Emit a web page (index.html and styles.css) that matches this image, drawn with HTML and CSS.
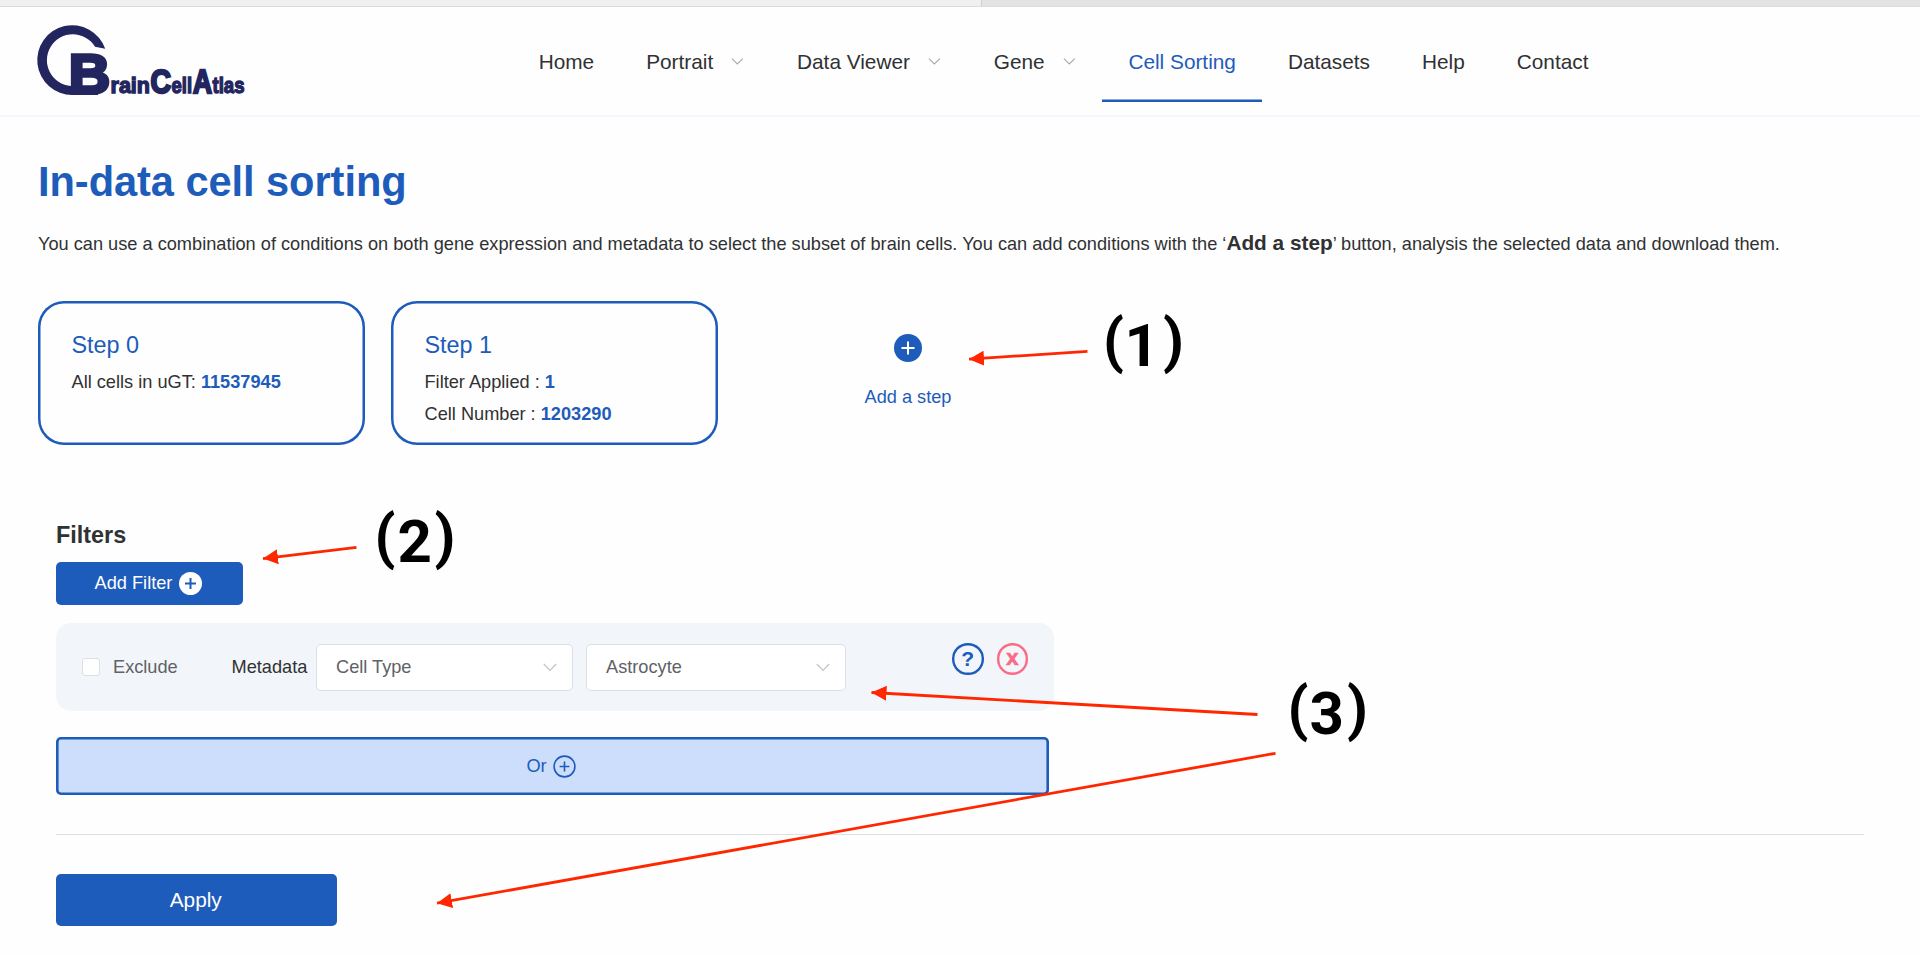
FILE: index.html
```html
<!DOCTYPE html>
<html lang="en">
<head>
<meta charset="utf-8">
<title>Brain Cell Atlas - Cell Sorting</title>
<link rel="stylesheet" href="styles.css">
</head>
<body>
<div class="tabstrip"><div class="tab-left"></div><div class="tab-right"></div></div>
<header class="header">
  <svg class="logo" viewBox="36 20 210 80" width="210" height="80">
    <path d="M105.2 48.8A34.9 34.9 0 1 0 72.5 95H98V86H71A25.9 25.9 0 1 1 95 46.8Z"/>
    <text y="93.4"><tspan class="logo-b" x="68.8" y="92.8" textLength="41.5" lengthAdjust="spacingAndGlyphs">B</tspan><tspan class="logo-s" x="110.5" y="93.2" textLength="39.5" lengthAdjust="spacingAndGlyphs">rain</tspan><tspan class="logo-l" x="150.5" y="93.4" textLength="20.5" lengthAdjust="spacingAndGlyphs">C</tspan><tspan class="logo-s" x="171.5" y="93.2" textLength="20.5" lengthAdjust="spacingAndGlyphs">ell</tspan><tspan class="logo-l" x="193" y="93.4" textLength="19" lengthAdjust="spacingAndGlyphs">A</tspan><tspan class="logo-s" x="212.5" y="93.2" textLength="32" lengthAdjust="spacingAndGlyphs">tlas</tspan></text>
  </svg>
  <nav class="nav">
    <a class="nav-item">Home</a>
    <a class="nav-item">Portrait<svg class="nav-arrow" viewBox="0 0 32 20"><path d="M19 6.5l5.5 5.5 5.5-5.5"/></svg></a>
    <a class="nav-item">Data Viewer<svg class="nav-arrow" viewBox="0 0 32 20"><path d="M19 6.5l5.5 5.5 5.5-5.5"/></svg></a>
    <a class="nav-item">Gene<svg class="nav-arrow" viewBox="0 0 32 20"><path d="M19 6.5l5.5 5.5 5.5-5.5"/></svg></a>
    <a class="nav-item active">Cell Sorting</a>
    <a class="nav-item">Datasets</a>
    <a class="nav-item">Help</a>
    <a class="nav-item">Contact</a>
  </nav>
</header>
<main class="main">
  <h1 class="title">In-data cell sorting</h1>
  <p class="intro">You can use a combination of conditions on both gene expression and metadata to select the subset of brain cells. You can add conditions with the ‘<b>Add a step</b>’ button, analysis the selected data and download them.</p>
  <section class="steps">
    <div class="card">
      <div class="card-title">Step 0</div>
      <div class="card-line">All cells in uGT: <b>11537945</b></div>
    </div>
    <div class="card">
      <div class="card-title">Step 1</div>
      <div class="card-line">Filter Applied : <b>1</b></div>
      <div class="card-line">Cell Number : <b>1203290</b></div>
    </div>
    <div class="add-step">
      <svg width="28" height="28" viewBox="0 0 28 28"><circle cx="14" cy="14" r="14" fill="#1d5cba"/><path d="M14 7.5v13M7.5 14h13" stroke="#fff" stroke-width="2"/></svg>
      <span class="add-label">Add a step</span>
    </div>
  </section>
  <section class="filters">
    <h2 class="filters-title">Filters</h2>
    <button class="add-filter">Add Filter<svg width="23" height="23" viewBox="0 0 23 23"><circle cx="11.5" cy="11.5" r="11.5" fill="#fff"/><path d="M11.5 6v11M6 11.5h11" stroke="#1d5cba" stroke-width="2"/></svg></button>
    <div class="filter-row">
      <span class="checkbox"></span>
      <span class="exclude">Exclude</span>
      <span class="meta">Metadata</span>
      <div class="select select-key">Cell Type<svg width="14" height="9" viewBox="0 0 14 9"><path d="M.8 1l6.2 6.5L13.2 1"/></svg></div>
      <div class="select select-value">Astrocyte<svg width="14" height="9" viewBox="0 0 14 9"><path d="M.8 1l6.2 6.5L13.2 1"/></svg></div>
      <div class="row-actions">
        <span class="round help">?</span>
        <span class="round remove">x</span>
      </div>
    </div>
    <div class="or">Or<svg width="23" height="23" viewBox="0 0 23 23"><circle cx="11.5" cy="11.5" r="10.4"/><path d="M11.5 6.6v9.8M6.6 11.5h9.8"/></svg></div>
    <div class="divider"></div>
    <button class="apply">Apply</button>
  </section>
</main>
<svg class="notes" viewBox="0 0 1920 955" width="1920" height="955">
  <defs><marker id="tip" viewBox="0 0 15 15" refX="15" refY="7.5" markerWidth="15" markerHeight="15" markerUnits="userSpaceOnUse" orient="auto"><path d="M15 7.5L0 0V15Z" fill="#ff2600"/></marker></defs>
  <g class="arrows">
    <path marker-end="url(#tip)" d="M1087.5 351.3L969 359.2"/>
    <path marker-end="url(#tip)" d="M356.5 547.3L263 558.6"/>
    <path marker-end="url(#tip)" d="M1257.5 714.5L871.5 692.5"/>
    <path marker-end="url(#tip)" d="M1275.5 753.3L437 903.2"/>
  </g>
  <text x="1103 1124.5 1163" y="360.5 366 360.5">(1)</text>
  <text x="374.5 397.5 434.5" y="556.5 562 556.5">(2)</text>
  <text x="1287.5 1309.5 1347" y="728.5 734 728.5">(3)</text>
</svg>
</body>
</html>
```

FILE: styles.css
```css
* { box-sizing: border-box; }
body {
  margin: 0;
  height: 955px;
  overflow: hidden;
  background: #fefefe;
  font-family: "Liberation Sans", Arial, sans-serif;
  font-size: 18.2px;
  color: #303133;
}
.tabstrip { display: flex; height: 7px; border-bottom: 1px solid #dcdcdc; }
.tab-left { width: 982px; background: #f0f0f0; border-right: 1px solid #cfcfcf; }
.tab-right { flex: 1; background: #e3e3e3; }
.header {
  display: flex;
  height: 110px;
  padding: 13px 0 0 36px;
  border-bottom: 2px solid #f3f9fe;
}
.logo { overflow: visible; fill: #23255f; font-weight: bold; }
.logo tspan { stroke: #23255f; stroke-miterlimit: 2; }
.logo-b { font-size: 56px; stroke-width: 3.4px; }
.logo-s { font-size: 21.5px; stroke-width: 1.3px; }
.logo-l { font-size: 34px; stroke-width: 2.4px; }
.nav { display: flex; margin: 2px 0 0 266.7px; }
.nav-item {
  display: flex;
  align-items: center;
  height: 80px;
  padding: 0 26px;
  font-size: 20.8px;
  white-space: nowrap;
}
.nav-item.active { color: #1d5cba; box-shadow: inset 0 -2.5px #1d5cba; }
.nav-arrow { width: 31.8px; height: 20px; fill: none; stroke: #a5a8ae; stroke-width: 1.1; }
.main { padding: 40px 56px 0 38px; }
.title { margin: 0; font-size: 41.6px; line-height: 50px; letter-spacing: -.06px; color: #1d5cba; }
.intro { margin: 21px 0 43px; height: 30px; line-height: 30px; white-space: nowrap; }
.intro b { font-size: 20.8px; }
.steps { display: flex; gap: 26px; }
.card {
  width: 327px;
  height: 144px;
  padding: 29px 33.5px 0;
  border-radius: 26px;
  box-shadow: inset 0 0 0 2.5px #1d5cba;
}
.card-title { margin-bottom: 6px; font-size: 23.4px; line-height: 30px; color: #1d5cba; }
.card-line { line-height: 32.2px; }
.card-line b { color: #1d5cba; }
.add-step {
  display: flex;
  flex-direction: column;
  align-items: center;
  width: 328px;
  padding-top: 33px;
}
.add-label { margin-top: 20px; line-height: 30px; color: #1d5cba; }
.filters { padding: 75px 0 0 18px; }
.filters-title { margin: 0 0 12px; font-size: 23.4px; line-height: 30px; }
.add-filter, .apply {
  display: flex;
  align-items: center;
  justify-content: center;
  border: 0;
  border-radius: 5px;
  background: #1d5cba;
  color: #fff;
  font: 18.2px "Liberation Sans", Arial, sans-serif;
}
.add-filter { gap: 7px; width: 187px; height: 43px; margin-bottom: 18px; padding: 0 2px 0 0; }
.filter-row {
  display: flex;
  align-items: center;
  width: 998px;
  height: 88px;
  padding: 0 26px 0 25.5px;
  border-radius: 15px;
  background: #f2f6fa;
}
.checkbox { width: 18px; height: 18px; border: 1px solid #dcdfe6; border-radius: 3px; background: #fff; }
.exclude { width: 118.5px; margin-left: 13.5px; color: #606266; }
.meta { width: 84px; }
.select {
  display: flex;
  align-items: center;
  justify-content: space-between;
  height: 47px;
  padding: 0 15px 0 19.5px;
  border: 1px solid #dcdfe6;
  border-radius: 5px;
  background: #fff;
  color: #606266;
}
.select svg { fill: none; stroke: #c0c4cc; stroke-width: 1.2; }
.select-key { width: 257px; margin-right: 13px; }
.select-value { width: 260px; }
.row-actions { display: flex; gap: 13px; margin: -16px 0 0 auto; }
.round {
  display: flex;
  align-items: center;
  justify-content: center;
  width: 31.5px;
  height: 31.5px;
  border-radius: 50%;
  box-shadow: inset 0 0 0 2.4px;
  font-weight: bold;
  font-size: 21px;
}
.help { color: #1d5cba; }
.remove { color: #fb6b85; font-family: "Liberation Mono", monospace; font-size: 22px; line-height: 31px; -webkit-text-stroke: .6px #fb6b85; }
.or {
  display: flex;
  align-items: center;
  justify-content: center;
  gap: 6px;
  width: 992.5px;
  height: 58px;
  margin-top: 26px;
  padding-right: 2.5px;
  border-radius: 5px;
  background: #cdddfc;
  box-shadow: inset 0 0 0 2.6px #1d5cba;
  color: #1d5cba;
}
.or svg { fill: none; stroke: #1d5cba; stroke-width: 1.6; }
.divider { height: 1px; margin: 39px 0; background: #dcdfe6; }
.apply { width: 280.5px; height: 52px; padding: 0 1px 1px 0; font-size: 20.8px; }
/* Annotation layer drawn over the page */
.notes { position: absolute; left: 0; top: 0; pointer-events: none; }
.notes text { font: bold 60px Roboto, sans-serif; fill: #000; }
.arrows { fill: none; stroke: #ff2600; stroke-width: 2.8; }
```
